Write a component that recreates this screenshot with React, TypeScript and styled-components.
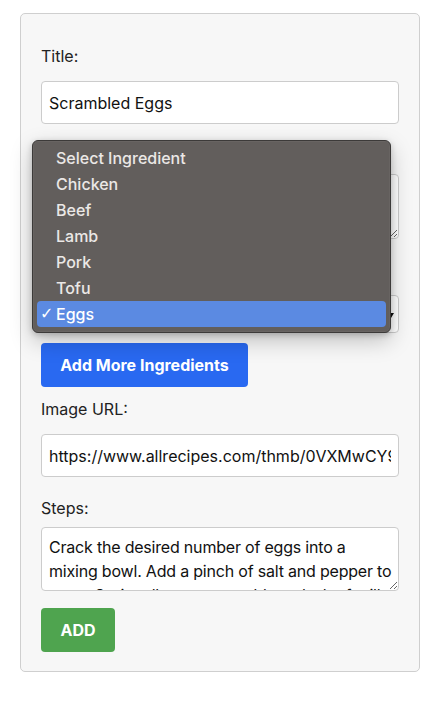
import React from "react";
import styled, { createGlobalStyle } from "styled-components";

const FONT = `Inter, "Liberation Sans", Arial, sans-serif`;

const Global = createGlobalStyle`
  html, body { margin: 0; padding: 0; background: #ffffff; }
  body { font-family: ${FONT}; color: #222; }
  * { box-sizing: border-box; }
`;

const Page = styled.div`
  padding: 13px 21px 30px 20px;
`;

const Card = styled.form`
  position: relative;
  width: 400px;
  background: #f7f7f7;
  border: 1px solid #cfcfcf;
  border-radius: 5px;
  padding: 33px 20px 19px;
  display: flex;
  flex-direction: column;
  align-items: flex-start;
`;

const Label = styled.label<{ $top?: number; $covered?: boolean }>`
  display: block;
  font-size: 16px;
  line-height: 18px;
  color: #222;
  margin-top: ${(p) => p.$top ?? 0}px;
  visibility: ${(p) => (p.$covered ? "hidden" : "visible")};
`;

const TextInput = styled.input<{ $top?: number }>`
  width: 100%;
  height: 43px;
  margin-top: ${(p) => p.$top ?? 16}px;
  padding: 0 7px;
  border: 1px solid #cccccc;
  border-radius: 4px;
  background: #fff;
  font-family: ${FONT};
  font-size: 16px;
  color: #111;
  outline: none;
`;

const TextArea = styled.textarea<{ $top?: number; $height: number }>`
  width: 100%;
  height: ${(p) => p.$height}px;
  margin-top: ${(p) => p.$top ?? 16}px;
  padding: 7px 1px 7px 7px;
  border: 1px solid #cccccc;
  border-radius: 4px;
  background: #fff;
  font-family: ${FONT};
  font-size: 16px;
  letter-spacing: -0.2px;
  line-height: 24px;
  color: #111;
  resize: vertical;
  outline: none;
  overflow: hidden;
  scrollbar-width: none;
  display: block;
`;

const SelectBox = styled.div<{ $top?: number }>`
  position: relative;
  width: 100%;
  height: 38px;
  margin-top: ${(p) => p.$top ?? 16}px;
  border: 1px solid #cccccc;
  border-radius: 4px;
  background: #fff;
`;

const Caret = styled.svg`
  position: absolute;
  right: 4px;
  top: 15px;
`;

const Button = styled.button<{ $color: string; $top: number; $width: number }>`
  margin-top: ${(p) => p.$top}px;
  width: ${(p) => p.$width}px;
  height: 44px;
  border: none;
  border-radius: 4px;
  background: ${(p) => p.$color};
  color: #fff;
  font-family: ${FONT};
  font-weight: 700;
  font-size: 16px;
  cursor: pointer;
`;

const Menu = styled.div`
  position: absolute;
  left: 11px;
  top: 126px;
  width: 359px;
  height: 193px;
  background: #625e5c;
  border: 1px solid #3c3a39;
  border-radius: 6px;
  box-shadow: 0 0 0 0.5px rgba(255, 255, 255, 0.08) inset,
    0 8px 22px rgba(0, 0, 0, 0.22), 0 2px 6px rgba(0, 0, 0, 0.2);
  padding: 4px 4px 5px;
  display: flex;
  flex-direction: column;
  z-index: 5;
`;

const MenuItem = styled.div<{ $selected?: boolean }>`
  position: relative;
  height: 26px;
  line-height: 26px;
  padding-left: 19px;
  border-radius: 4px;
  font-size: 16px;
  font-weight: 500;
  color: ${(p) => (p.$selected ? "#ffffff" : "#ebe8e6")};
  background: ${(p) => (p.$selected ? "#5b8ae2" : "transparent")};
`;

const Check = styled.span`
  position: absolute;
  left: 3px;
  top: 0;
  font-size: 16px;
  font-family: "DejaVu Sans", sans-serif;
  color: #fff;
`;

const items = ["Select Ingredient", "Chicken", "Beef", "Lamb", "Pork", "Tofu", "Eggs"];

export default function App() {
  return (
    <Page>
      <Global />
      <Card onSubmit={(e) => e.preventDefault()}>
        <Label>Title:</Label>
        <TextInput defaultValue="Scrambled Eggs" />
        <Label $top={16} $covered>
          Description:
        </Label>
        <TextArea $top={16} $height={65} />
        <Label $top={21} $covered>
          Ingredients:
        </Label>
        <SelectBox $top={17}>
          <Caret width="6" height="8" viewBox="0 0 6 8">
            <path d="M0 2 L6 2 L3 7 Z" fill="#111" />
          </Caret>
        </SelectBox>
        <Button type="button" $color="#2969f1" $top={10} $width={207}>
          Add More Ingredients
        </Button>
        <Label $top={13}>Image URL:</Label>
        <TextInput defaultValue="https://www.allrecipes.com/thmb/0VXMwCY9" />
        <Label $top={22}>Steps:</Label>
        <TextArea
          $top={10}
          $height={64}
          defaultValue="Crack the desired number of eggs into a mixing bowl. Add a pinch of salt and pepper to taste. Optionally, you can add a splash of milk or cream for extra fluffiness."
        />
        <Button type="submit" $color="#4fa44f" $top={17} $width={74}>
          ADD
        </Button>
        <Menu>
          {items.map((it) => (
            <MenuItem key={it} $selected={it === "Eggs"}>
              {it === "Eggs" && <Check>✓</Check>}
              {it}
            </MenuItem>
          ))}
        </Menu>
      </Card>
    </Page>
  );
}
